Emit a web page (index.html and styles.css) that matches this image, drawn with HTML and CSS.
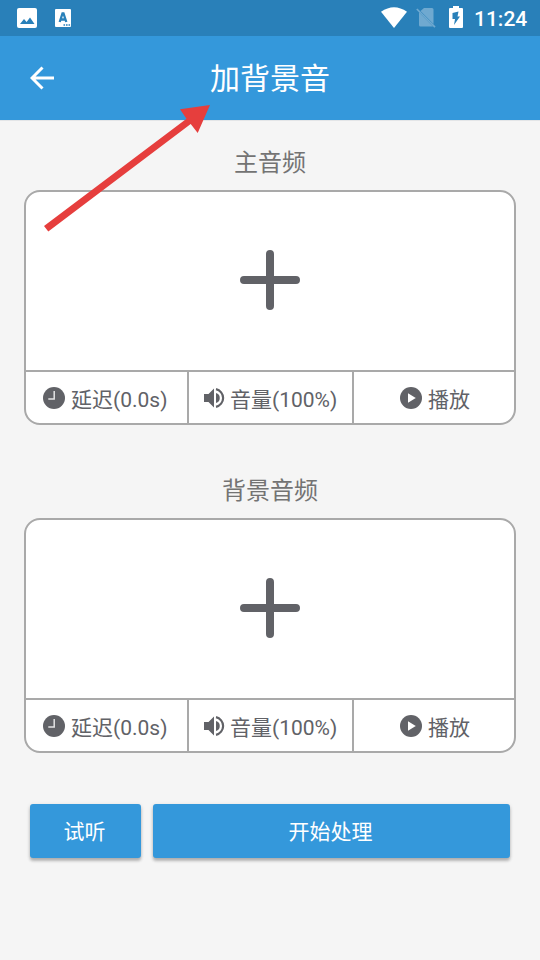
FILE: index.html
```html
<!DOCTYPE html>
<html lang="zh-CN">
<head>
<meta charset="utf-8">
<title>加背景音</title>
<link rel="stylesheet" href="styles.css">
</head>
<body>
<svg class="defs" width="0" height="0">
  <symbol id="plus" viewBox="0 0 60 60"><path d="M30 4v52M4 30h52" stroke="currentColor" stroke-width="8" stroke-linecap="round"/></symbol>
  <symbol id="clock" viewBox="0 0 22 22"><circle cx="11" cy="11" r="11" fill="currentColor"/><path d="M11.200 4v8.100H5.300" fill="none" stroke="#e4e4e5" stroke-width="1.500"/></symbol>
  <symbol id="volume" viewBox="0 0 22 22"><path d="M1 7h4.500L11 1.500v19l-5.500-5.500H1z" fill="currentColor"/><path d="M13 6a5.200 5.200 0 0 1 0 10z" fill="currentColor"/><path d="M13 2.200a9 9 0 0 1 0 17.600" fill="none" stroke="currentColor" stroke-width="2.200"/></symbol>
  <symbol id="play" viewBox="0 0 22 22"><circle cx="11" cy="11" r="11" fill="currentColor"/><path d="M8 6.300l7.800 4.700L8 15.700z" fill="#fff"/></symbol>
</svg>
<header class="status">
  <svg class="picture" width="20" height="20" viewBox="0 0 20 20"><rect width="20" height="20" rx="2" fill="#fff"/><path d="M3 16l4-5 2.600 3 3.400-4.500 4.500 6.500z" fill="#2980b9"/></svg>
  <svg class="keyboard" width="16" height="18" viewBox="0 0 16 18"><rect width="16" height="18" rx="1" fill="#fff"/><path d="M4.700 13L7.500 4.500h1L11.300 13M5.800 10.500h4.400" fill="none" stroke="#2980b9" stroke-width="2.300"/><path d="M8.500 16h7" stroke="#2980b9" stroke-width="1.400" stroke-dasharray="1.600 .9"/></svg>
  <svg class="wifi" width="26" height="21" viewBox="0 0 26 21"><path d="M0 4.700Q13-4.300 26 4.700L13 21z" fill="#fff"/></svg>
  <svg class="sim" width="20" height="21" viewBox="0 0 20 21"><path d="M8 1h8q1.500 0 1.500 1.500V17L4.500 4zM3 5.200L17 19.500H4.500Q3 19.500 3 18z" fill="#6fa9d0"/><path d="M.8 2L19 20.200" stroke="#6fa9d0" stroke-width="1.700"/></svg>
  <svg class="battery" width="14" height="22" viewBox="0 0 14 22"><path d="M1 2h3V0h6v2h3q1 0 1 1v18q0 1-1 1H1q-1 0-1-1V3q0-1 1-1z" fill="#fff"/><path d="M9.500 5.500L3.500 7v6H6l-1 6L11 10.500H8.500z" fill="#2980b9"/></svg>
  <span class="time">11:24</span>
</header>
<nav class="toolbar">
  <svg class="back" width="24" height="24" viewBox="0 0 24 24"><path d="M12.500 1.500L2 12l10.500 10.500M2 12h22" fill="none" stroke="#fff" stroke-width="3"/></svg>
  <h1>加背景音</h1>
</nav>
<main>
  <section class="track">
    <h2>主音频</h2>
    <div class="card">
      <div class="add"><svg width="60" height="60"><use href="#plus"/></svg></div>
      <div class="controls">
        <div class="cell"><svg width="22" height="22"><use href="#clock"/></svg><span>延迟(0.0s)</span></div>
        <div class="cell"><svg width="22" height="22"><use href="#volume"/></svg><span>音量(100%)</span></div>
        <div class="cell"><svg width="22" height="22"><use href="#play"/></svg><span>播放</span></div>
      </div>
    </div>
  </section>
  <section class="track">
    <h2>背景音频</h2>
    <div class="card">
      <div class="add"><svg width="60" height="60"><use href="#plus"/></svg></div>
      <div class="controls">
        <div class="cell"><svg width="22" height="22"><use href="#clock"/></svg><span>延迟(0.0s)</span></div>
        <div class="cell"><svg width="22" height="22"><use href="#volume"/></svg><span>音量(100%)</span></div>
        <div class="cell"><svg width="22" height="22"><use href="#play"/></svg><span>播放</span></div>
      </div>
    </div>
  </section>
  <div class="actions">
    <button>试听</button>
    <button>开始处理</button>
  </div>
</main>
<svg class="pointer" width="170" height="132" viewBox="0 0 170 132"><path d="M4 126L8.300 131.500 150.700 24l7 9L170 5l-30 4.300 6.500 9.400z" fill="#e63e3d"/></svg>
</body>
</html>
```

FILE: styles.css
```css
* { box-sizing: border-box; }
body {
  margin: 0;
  height: 960px;
  overflow: hidden;
  position: relative;
  background: #f5f5f5;
  color: #616267;
  font-family: Roboto, "Noto Sans CJK SC", sans-serif;
}
svg { display: block; flex: none; }
.defs { position: absolute; }
.status {
  height: 36px;
  padding: 0 12px 0 17px;
  display: flex;
  align-items: center;
  background: #2980b9;
}
.keyboard { margin-left: 18px; }
.wifi { margin: 0 0 2px auto; }
.sim { margin: 0 0 1px 9px; }
.battery { margin: 0 11px 2px 13px; }
.time {
  width: 54px;
  padding-top: 2px;
  color: #fff;
  font-size: 21px;
  font-weight: 500;
  line-height: 34px;
  white-space: nowrap;
}
.toolbar {
  height: 84px;
  padding: 0 30px;
  display: grid;
  grid-template-columns: 24px 1fr 24px;
  align-items: center;
  background: #3498db;
  box-shadow: 0 1px 0 #e3e5e7;
}
h1, h2 { margin: 0; font-weight: 400; text-align: center; }
h1 { padding-top: 2px; color: #fff; font-size: 30px; line-height: 44px; }
main { padding: 0 24px; }
h2 {
  height: 70px;
  padding-top: 25px;
  color: #737373;
  font-size: 24px;
  line-height: 36px;
}
.track + .track h2 { height: 93px; padding-top: 48px; }
.card {
  height: 235px;
  border: 2px solid #a9a9a9;
  border-radius: 16px;
  background: #fff;
  overflow: hidden;
}
.add { height: 178px; padding-bottom: 2px; display: grid; place-items: center; }
.controls {
  height: 53px;
  display: grid;
  grid-template-columns: 163px 165px 160px;
  border-top: 2px solid #a9a9a9;
}
.cell {
  display: flex;
  align-items: center;
  gap: 6px;
  padding-left: 17px;
  font-size: 21px;
  line-height: 30px;
  white-space: nowrap;
}
.cell + .cell { padding-left: 14px; gap: 5px; }
.cell:last-child { padding-left: 46px; gap: 6px; }
.cell:not(:last-child) { border-right: 2px solid #a9a9a9; }
.cell span { padding-top: 5px; }
.actions {
  padding: 51px 6px 0;
  display: grid;
  grid-template-columns: 111px 1fr;
  gap: 12px;
}
button {
  height: 54px;
  padding: 0 2px 2px 0;
  border: 0;
  border-radius: 3px;
  background: #3498db;
  box-shadow: 0 3px 3px rgba(0, 0, 0, .23), 0 1px 4px rgba(0, 0, 0, .12);
  color: #fff;
  font: inherit;
  font-size: 21px;
}
.pointer { position: absolute; left: 40px; top: 100px; overflow: visible; }
```
